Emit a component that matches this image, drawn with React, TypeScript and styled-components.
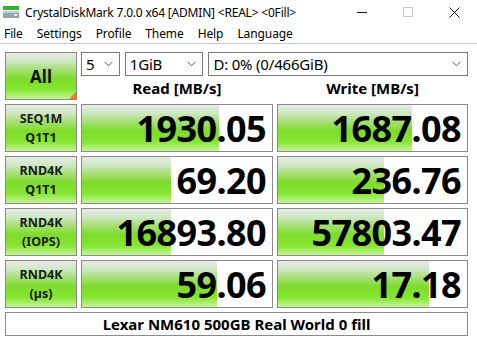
import React from "react";
import styled, { createGlobalStyle } from "styled-components";

const GlobalStyle = createGlobalStyle`
  html, body {
    margin: 0;
    padding: 0;
    background: #ffffff;
  }
  body {
    font-family: "Noto Sans", "Open Sans", "DejaVu Sans", sans-serif;
    color: #000;
  }
`;

const Window = styled.div`
  width: 477px;
  height: 342px;
  background: #ffffff;
  overflow: hidden;
`;

const TitleBar = styled.div`
  display: flex;
  align-items: center;
  height: 24px;
  padding-left: 3px;
`;

const TitleText = styled.span`
  margin-left: 6px;
  font-size: 12px;
  letter-spacing: -0.2px;
  flex: 1;
`;

const WinButton = styled.div`
  width: 46px;
  display: flex;
  justify-content: center;
  align-items: center;
`;

const MenuBar = styled.div`
  display: flex;
  align-items: center;
  height: 19px;
  border-bottom: 1px solid #c8c8c8;
  margin-bottom: 8px;
  padding-left: 4px;
`;

const MenuItem = styled.span`
  font-size: 12px;
  margin-right: 14px;
  letter-spacing: -0.1px;
`;

const Grid = styled.div`
  display: grid;
  grid-template-columns: 72px 192px 191px;
  column-gap: 4px;
  row-gap: 4px;
  padding-left: 5px;
  grid-auto-rows: 48px;
`;

const greenGradient = `linear-gradient(to bottom, #e6ebe3 0%, #d2e8cb 16%, #a7e078 36%, #7edb2b 56%, #86e632 80%, #c6f59a 100%)`;

const AllButton = styled.div`
  position: relative;
  box-sizing: border-box;
  border: 1px solid #8a8a8a;
  background: ${greenGradient};
  display: flex;
  align-items: center;
  justify-content: center;
  font-weight: 700;
  font-size: 17px;
  color: #111;
  &::after {
    content: "";
    position: absolute;
    right: 0;
    bottom: 0;
    border-style: solid;
    border-width: 0 0 7px 7px;
    border-color: transparent transparent #f07d1a transparent;
  }
`;

const TopArea = styled.div`
  grid-column: 2 / 4;
  display: flex;
  flex-direction: column;
`;

const ComboRow = styled.div`
  display: flex;
  gap: 5px;
  height: 24px;
  margin-bottom: 2px;
`;

const Combo = styled.div<{ $w: number }>`
  box-sizing: border-box;
  width: ${(p) => p.$w}px;
  height: 24px;
  border: 1px solid #7a7a7a;
  display: flex;
  align-items: center;
  padding: 0 6px 0 4px;
  font-size: 15px;
  letter-spacing: -0.2px;
  background: #fff;
  span {
    flex: 1;
  }
`;

const Headers = styled.div`
  display: grid;
  grid-template-columns: 192px 191px;
  column-gap: 4px;
`;

const Header = styled.div`
  text-align: center;
  font-weight: 700;
  font-size: 15px;
  line-height: 20px;
`;

const Label = styled.div`
  box-sizing: border-box;
  border: 1px solid #8a8a8a;
  background: ${greenGradient};
  display: flex;
  flex-direction: column;
  align-items: center;
  justify-content: center;
  font-weight: 700;
  font-size: 12.5px;
  line-height: 19px;
  color: #1a1a1a;
`;

const ResultBox = styled.div`
  position: relative;
  box-sizing: border-box;
  border: 1px solid #8a8a8a;
  background: #fff;
  overflow: hidden;
`;

const Bar = styled.div`
  position: absolute;
  left: 0;
  top: 0;
  bottom: 0;
  background: ${greenGradient};
`;

const Value = styled.div`
  position: relative;
  height: 100%;
  display: flex;
  align-items: center;
  justify-content: flex-end;
  padding-right: 6px;
  font-weight: 700;
  font-size: 36px;
  letter-spacing: -0.6px;
  color: #000;
`;

const Comment = styled.div`
  grid-column: 1 / 4;
  height: 24px;
  box-sizing: border-box;
  border: 1px solid #8a8a8a;
  display: flex;
  align-items: center;
  justify-content: center;
  font-weight: 700;
  font-size: 15px;
`;

const Chevron = () => (
  <svg width="9" height="6" viewBox="0 0 9 6">
    <path d="M0.5 0.8 L4.5 4.8 L8.5 0.8" fill="none" stroke="#555" strokeWidth="1" />
  </svg>
);

const AppIcon = () => (
  <svg width="16" height="14" viewBox="0 0 16 14">
    <rect x="0" y="1" width="16" height="4" fill="#35b22d" />
    <rect x="0" y="6" width="16" height="7" fill="#9aa3a8" />
    <rect x="0" y="6" width="16" height="2" fill="#c5ccd0" />
    <rect x="11" y="9" width="3" height="2" fill="#e8eef0" />
  </svg>
);

const rows = [
  { l1: "SEQ1M", l2: "Q1T1", read: "1930.05", rp: 72, write: "1687.08", wp: 71 },
  { l1: "RND4K", l2: "Q1T1", read: "69.20", rp: 47, write: "236.76", wp: 56 },
  { l1: "RND4K", l2: "(IOPS)", read: "16893.80", rp: 47, write: "57803.47", wp: 56 },
  { l1: "RND4K", l2: "(µs)", read: "59.06", rp: 71, write: "17.18", wp: 80 },
];

const App: React.FC = () => {
  return (
    <Window>
      <GlobalStyle />
      <TitleBar>
        <AppIcon />
        <TitleText>CrystalDiskMark 7.0.0 x64 [ADMIN] &lt;REAL&gt; &lt;0Fill&gt;</TitleText>
        <WinButton>
          <svg width="10" height="10" viewBox="0 0 10 10">
            <path d="M0 5.5 H10" stroke="#111" strokeWidth="1" />
          </svg>
        </WinButton>
        <WinButton>
          <svg width="10" height="10" viewBox="0 0 10 10">
            <rect x="0.5" y="0.5" width="9" height="9" fill="none" stroke="#c8c8c8" strokeWidth="1" />
          </svg>
        </WinButton>
        <WinButton>
          <svg width="11" height="11" viewBox="0 0 11 11">
            <path d="M0.5 0.5 L10.5 10.5 M10.5 0.5 L0.5 10.5" stroke="#111" strokeWidth="1" />
          </svg>
        </WinButton>
      </TitleBar>
      <MenuBar>
        {["File", "Settings", "Profile", "Theme", "Help", "Language"].map((m) => (
          <MenuItem key={m}>{m}</MenuItem>
        ))}
      </MenuBar>
      <Grid>
        <AllButton>All</AllButton>
        <TopArea>
          <ComboRow>
            <Combo $w={39}>
              <span>5</span>
              <Chevron />
            </Combo>
            <Combo $w={79}>
              <span>1GiB</span>
              <Chevron />
            </Combo>
            <Combo $w={261}>
              <span>D: 0% (0/466GiB)</span>
              <Chevron />
            </Combo>
          </ComboRow>
          <Headers>
            <Header>Read [MB/s]</Header>
            <Header>Write [MB/s]</Header>
          </Headers>
        </TopArea>
        {rows.map((r, i) => (
          <React.Fragment key={i}>
            <Label>
              <div>{r.l1}</div>
              <div>{r.l2}</div>
            </Label>
            <ResultBox>
              <Bar style={{ width: `${r.rp}%` }} />
              <Value>{r.read}</Value>
            </ResultBox>
            <ResultBox>
              <Bar style={{ width: `${r.wp}%` }} />
              <Value>{r.write}</Value>
            </ResultBox>
          </React.Fragment>
        ))}
        <Comment>Lexar NM610 500GB Real World 0 fill</Comment>
      </Grid>
    </Window>
  );
};

export default App;
